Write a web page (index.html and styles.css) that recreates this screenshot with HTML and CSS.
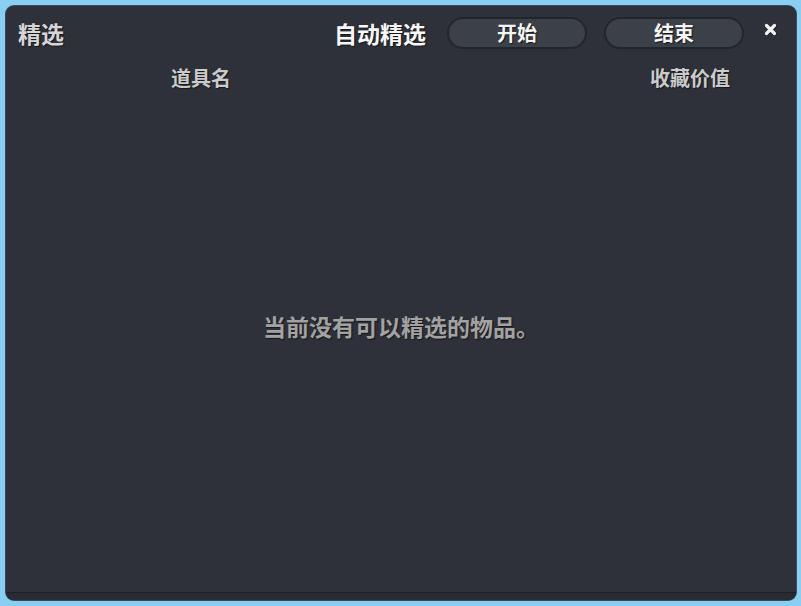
FILE: index.html
```html
<!DOCTYPE html>
<html lang="zh-CN">
<head>
<meta charset="utf-8">
<title>精选</title>
<link rel="stylesheet" href="styles.css">
</head>
<body>
<div class="panel">
  <div class="header">
    <div class="title">精选</div>
    <div class="spacer"></div>
    <div class="auto">自动精选</div>
    <button class="btn start">开始</button>
    <button class="btn stop">结束</button>
    <div class="close">
      <svg width="13" height="13" viewBox="0 0 13 13"><path d="M2.5 2.5 L10.5 10.5 M10.5 2.5 L2.5 10.5" stroke="#1a1c20" stroke-width="3.6" stroke-linecap="round" transform="translate(0.6 0.8)"/><path d="M2.5 2.5 L10.5 10.5 M10.5 2.5 L2.5 10.5" stroke="#f2f2f2" stroke-width="3.2" stroke-linecap="round"/></svg>
    </div>
  </div>
  <div class="columns">
    <div class="col-name">道具名</div>
    <div></div>
    <div class="col-value">收藏价值</div>
  </div>
  <div class="list">
    <div class="empty">当前没有可以精选的物品。</div>
  </div>
  <div class="footer"></div>
</div>
</body>
</html>
```
FILE: styles.css
```css
html, body {
  margin: 0;
  padding: 0;
}
body {
  background: #89cff4;
  width: 801px;
  height: 606px;
  overflow: hidden;
  font-family: "Noto Sans CJK SC", "Noto Sans", sans-serif;
  font-weight: bold;
}
.panel {
  position: relative;
  margin: 6px 0 0 6px;
  width: 790px;
  height: 594px;
  box-sizing: border-box;
  background: #2e3139;
  border-radius: 8px;
  display: flex;
  flex-direction: column;
  overflow: hidden;
  box-shadow: 0 0 0 1px #3a4a58;
}
.header {
  display: flex;
  align-items: center;
  height: 32px;
  margin-top: 11px;
  padding: 0 19px 0 12px;
}
.title {
  font-size: 23px;
  line-height: 32px;
  color: #d6d6d6;
  text-shadow: 1px 1px 1px #15171b;
}
.spacer {
  flex: 1;
}
.auto {
  font-size: 23px;
  line-height: 32px;
  color: #f7f7f7;
  text-shadow: 1px 1px 1px #15171b;
  margin-right: 21px;
}
.btn {
  width: 140px;
  height: 32px;
  box-sizing: border-box;
  border: 2px solid #22252a;
  border-radius: 16px;
  background: #3c4048;
  color: #f4f4f4;
  font-family: "Noto Sans CJK SC", "Noto Sans", sans-serif;
  font-weight: bold;
  font-size: 20px;
  line-height: 26px;
  padding: 0;
  text-shadow: 1px 1px 1px #15171b;
}
.start {
  margin-right: 17px;
}
.stop {
  margin-right: 20px;
}
.close {
  align-self: flex-start;
  margin-top: 6px;
  width: 13px;
  height: 13px;
}
.close svg {
  display: block;
}
.columns {
  display: grid;
  grid-template-columns: 390px 1fr 188px;
  padding-right: 12px;
  margin-top: 17px;
  font-size: 20px;
  line-height: 24px;
  color: #cbcbcb;
  text-shadow: 1px 1px 1px #15171b;
}
.col-name,
.col-value {
  text-align: center;
}
.list {
  flex: 1;
  display: flex;
  align-items: center;
  justify-content: center;
  padding-bottom: 30px;
}
.empty {
  font-size: 23px;
  line-height: 30px;
  color: #a2a2a2;
  text-shadow: 1px 1px 1px #15171b;
}
.footer {
  height: 7px;
  border-top: 1px solid #1e2025;
  background: #282b31;
}
```
